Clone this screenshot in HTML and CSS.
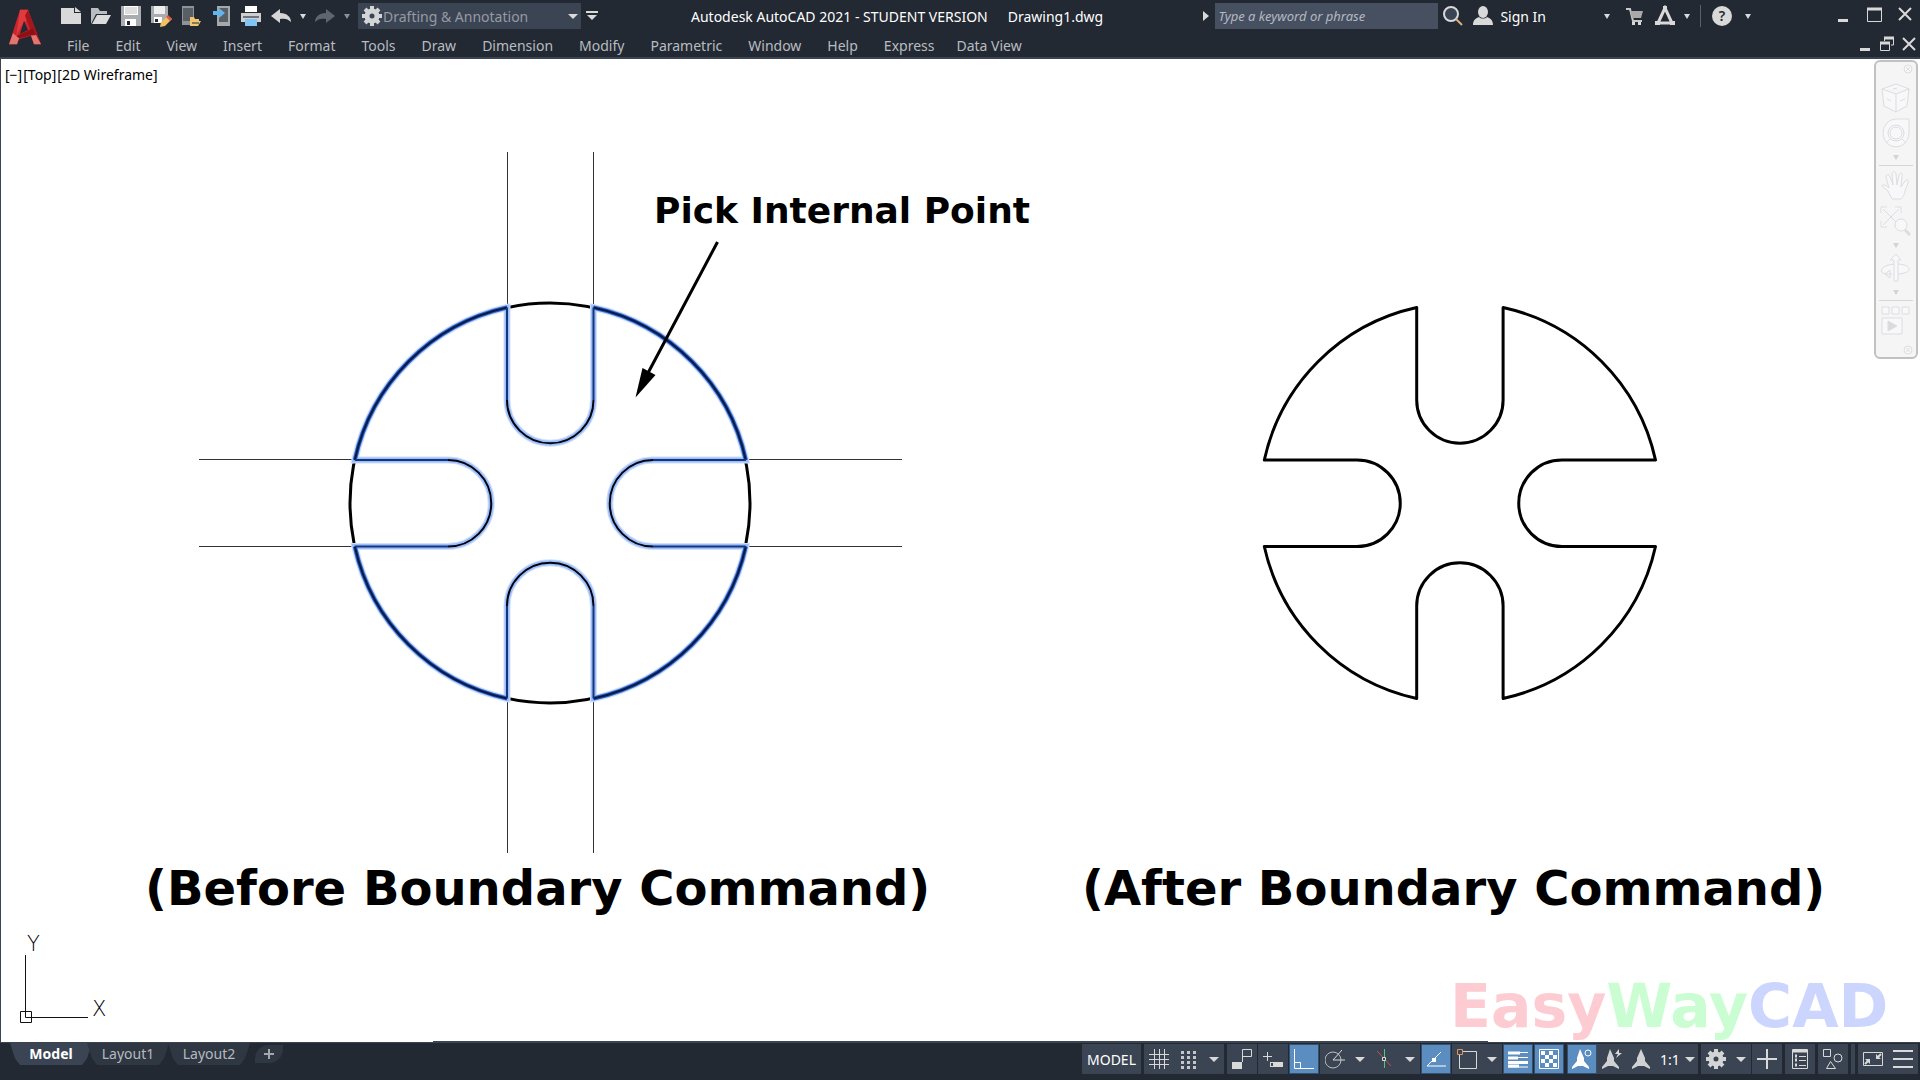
FILE: index.html
```html
<!DOCTYPE html>
<html lang="en">
<head>
    <meta charset="UTF-8">
    <meta name="viewport" content="width=device-width, initial-scale=1.0">
    <title>Autodesk AutoCAD 2021 - Drawing1.dwg</title>
    <link rel="stylesheet" href="styles.css">
</head>
<body>
    <header class="header">
        <button class="app-logo" aria-label="Application menu">
            <svg width="34" height="36" viewBox="0 0 34 43" preserveAspectRatio="none">
                <path d="M12 1h8l13 41h-7l-3-10-12 4-2 6H1z" fill="#c9252c"/>
                <path d="M12 1h8l2 8-9 12-5 13z" fill="#e03a3e"/>
                <path d="M20 1l13 41-6-3L17 8z" fill="#a3161d"/>
                <path d="M16 14l4 11-8 5z" fill="#232932"/>
                <path d="M7 33l18-10 2 7-15 5z" fill="#8e1015"/>
                <path d="M1 42l4-13 6 6-2 7zM26 42l-3-10 5-1 5 11z" fill="#e2766f"/>
            </svg>
        </button>
        <div class="bars">
            <div class="titlebar">
                <div class="quick">
                    <button class="tool" aria-label="New"><svg width="22" height="22" viewBox="0 0 22 22"><path d="M1 3h13v5h7v11H1z" fill="#d9d9d9"/><path d="M15 2l6 5h-6z" fill="#d9d9d9"/></svg></button>
                    <button class="tool" aria-label="Open"><svg width="22" height="22" viewBox="0 0 22 22"><path d="M1 19V3h7l2 3h7v3H6z" fill="#b9bcc0"/><path d="M7 10h14l-5 9H2z" fill="#dcdcdc"/></svg></button>
                    <button class="tool" aria-label="Save"><svg width="22" height="22" viewBox="0 0 22 22"><path d="M1 1h20v20H1z" fill="#aaadaf"/><path d="M4 1h14v9H4z" fill="#fff"/><path d="M5 2h12v7H5z" fill="#dedede"/><path d="M5 14h11v7H5z" fill="#fff"/><path d="M7 16h3v4H7z" fill="#232932"/></svg></button>
                    <button class="tool" aria-label="Save As"><svg width="22" height="22" viewBox="0 0 22 22"><path d="M1 1h17v17H1z" fill="#aaadaf"/><path d="M4 1h11v8H4z" fill="#eee"/><path d="M4 12h8v6H4z" fill="#fff"/><path d="M5 14h3v3H5z" fill="#232932"/><path d="M10 22l1-5 7-6 4 3-7 7z" fill="#f0c063"/><path d="M18 10l4 4-2 2-4-4z" fill="#e05a4e"/></svg></button>
                    <button class="tool" aria-label="Open from mobile"><svg width="22" height="22" viewBox="0 0 22 22"><path d="M2 1h12v19H2z" fill="#8f9398"/><path d="M3 3h10v13H3z" fill="#5a5f66"/><path d="M10 20v-8h4l1 2h4v2h2l-3 5h-8z" fill="#f2c572"/><path d="M12 18h7" stroke="#232932"/></svg></button>
                    <button class="tool" aria-label="Save to mobile"><svg width="22" height="22" viewBox="0 0 22 22"><path d="M7 1h13v20H7z" fill="#a5a8ac"/><path d="M9 3h9v14H9z" fill="#5a5f66"/><path d="M3 6h6V3l6 5-6 5v-3H3z" fill="#5fb6ee"/></svg></button>
                    <button class="tool" aria-label="Plot"><svg width="22" height="22" viewBox="0 0 22 22"><path d="M5 1h12v6H5z" fill="#fff"/><path d="M1 8h20v9H1z" fill="#cfcfcf"/><path d="M3 11h16v2H3z" fill="#70757c"/><path d="M5 14h12v7H5z" fill="#7fc4f5"/></svg></button>
                    <button class="tool" aria-label="Undo"><svg width="22" height="22" viewBox="0 0 22 22"><path d="M1 11l9-7v4c7 0 11 4 11 9-3-3-6-4-11-3v4z" fill="#d5d5d5"/></svg></button>
                    <button class="caret" aria-label="Undo list"></button>
                    <button class="tool" aria-label="Redo"><svg width="22" height="22" viewBox="0 0 22 22"><path d="M21 11l-9-7v4C5 8 1 12 1 17c3-3 6-4 11-3v4z" fill="#5f656d"/></svg></button>
                    <button class="caret dim" aria-label="Redo list"></button>
                    <div class="workspace">
                        <svg class="gear" width="22" height="22" viewBox="0 0 22 22"><use href="#gear"/></svg>
                        <select aria-label="Workspace"><option>Drafting &amp; Annotation</option></select>
                        <span class="caret-big"></span>
                    </div>
                    <button class="customize" aria-label="Customize toolbar"><svg width="12" height="10" viewBox="0 0 12 10"><path d="M0 0h12v2H0zM1 4h10L6 9z" fill="#d9d9d9"/></svg></button>
                </div>
                <h1 class="title"><span>Autodesk AutoCAD 2021 - STUDENT VERSION</span><span>Drawing1.dwg</span></h1>
                <div class="info">
                    <button class="search-toggle" aria-label="Collapse search"><svg width="6" height="10" viewBox="0 0 6 10"><path d="M0 0l6 5-6 5z" fill="#d9d9d9"/></svg></button>
                    <input class="search" type="text" aria-label="Search" placeholder="Type a keyword or phrase">
                    <button class="tool" aria-label="Search"><svg width="22" height="22" viewBox="0 0 22 22"><circle cx="9" cy="9" r="7" fill="#3b4453" stroke="#d9d9d9" stroke-width="2"/><path d="M14 14l6 6" stroke="#d9b27c" stroke-width="2"/></svg></button>
                    <button class="signin"><svg width="22" height="22" viewBox="0 0 22 22"><ellipse cx="11" cy="7" rx="5" ry="6" fill="#d9d9d9"/><path d="M1 20c0-5 3-7 6-8 2 2 6 2 8 0 3 1 6 3 6 8z" fill="#d9d9d9"/></svg>Sign In</button>
                    <button class="caret" aria-label="Account menu"></button>
                    <button class="tool" aria-label="App store"><svg width="22" height="22" viewBox="0 0 22 22"><path d="M2 4h4l3 12h9" fill="none" stroke="#c9c9c9" stroke-width="2"/><path d="M6 6h13l-2 7H8z" fill="#a9a9a9"/><path d="M8 17h3v3H8zM14 17h3v3h-3z" fill="#d9d9d9"/></svg></button>
                    <button class="tool" aria-label="Autodesk app"><svg width="22" height="22" viewBox="0 0 22 22"><path d="M11 3L4 18h14z" fill="none" stroke="#d9d9d9" stroke-width="3"/><path d="M9 1h4v4H9zM1 16h5v4H1zM16 16h5v4h-5z" fill="#d9d9d9"/></svg></button>
                    <button class="caret" aria-label="App menu"></button>
                    <span class="divider"></span>
                    <button class="tool help" aria-label="Help"><span>?</span></button>
                    <button class="caret" aria-label="Help menu"></button>
                </div>
                <div class="window-btns">
                    <button aria-label="Minimize"><svg width="16" height="16" viewBox="0 0 16 16"><path d="M3 13h10v3H3z" fill="#d9d9d9"/></svg></button>
                    <button aria-label="Maximize"><svg width="16" height="16" viewBox="0 0 16 16"><path d="M1 3h15" stroke="#d9d9d9" stroke-width="3"/><path d="M1.500 2v13.500h14V2" fill="none" stroke="#d9d9d9"/></svg></button>
                    <button aria-label="Close"><svg width="16" height="16" viewBox="0 0 16 16"><path d="M2 2l12 12M14 2L2 14" stroke="#d9d9d9" stroke-width="2"/></svg></button>
                </div>
            </div>
            <div class="menubar">
                <nav class="menu">
                    <a href="#">File</a>
                    <a href="#">Edit</a>
                    <a href="#">View</a>
                    <a href="#">Insert</a>
                    <a href="#">Format</a>
                    <a href="#">Tools</a>
                    <a href="#">Draw</a>
                    <a href="#">Dimension</a>
                    <a href="#">Modify</a>
                    <a href="#">Parametric</a>
                    <a href="#">Window</a>
                    <a href="#">Help</a>
                    <a href="#">Express</a>
                    <a href="#">Data View</a>
                </nav>
                <div class="doc-btns">
                    <button aria-label="Minimize drawing"><svg width="16" height="16" viewBox="0 0 16 16"><path d="M3 12h10v3H3z" fill="#d9d9d9"/></svg></button>
                    <button aria-label="Restore drawing"><svg width="16" height="16" viewBox="0 0 16 16"><path d="M5 2h10M1 7h10" stroke="#d9d9d9" stroke-width="3"/><path d="M5.500 2v3M14.500 2v7H12M1.500 7v7.500h9V7" fill="none" stroke="#d9d9d9"/></svg></button>
                    <button aria-label="Close drawing"><svg width="16" height="16" viewBox="0 0 16 16"><path d="M2 2l12 12M14 2L2 14" stroke="#d9d9d9" stroke-width="2"/></svg></button>
                </div>
            </div>
        </div>
    </header>

    <main class="canvas">
        <svg class="drawing" viewBox="1 59 1919 983">
            <!-- construction lines -->
            <path class="thin" d="M507.500 152v155M593.500 152v155M507.500 698v155M593.500 698v155M199 459.500h156M199 546.500h156M746 459.500h156M746 546.500h156"/>
            <circle class="thick" cx="550" cy="503" r="200"/>
            <g id="before">
                <path class="glow" d="M507 307.500V400a43.200 43.200 0 0 0 86.500 0V307.500A200 200 0 0 1 745.800 460H653a43.200 43.200 0 0 0 0 86.500h92.800A200 200 0 0 1 593.500 698.500V606a43.200 43.200 0 0 0-86.500 0v92.500A200 200 0 0 1 354.800 546.500H448a43.200 43.200 0 0 0 0-86.500h-93.200A200 200 0 0 1 507 307.500z"/>
                <path class="halo" d="M507 307.500V400a43.200 43.200 0 0 0 86.500 0V307.500A200 200 0 0 1 745.800 460H653a43.200 43.200 0 0 0 0 86.500h92.800A200 200 0 0 1 593.500 698.500V606a43.200 43.200 0 0 0-86.500 0v92.500A200 200 0 0 1 354.800 546.500H448a43.200 43.200 0 0 0 0-86.500h-93.200A200 200 0 0 1 507 307.500z"/>
                <path class="rim-edge" d="M593.500 307.500A200 200 0 0 1 745.800 460M745.800 546.500A200 200 0 0 1 593.500 698.500M507 698.500A200 200 0 0 1 354.800 546.500M354.800 460A200 200 0 0 1 507 307.500"/>
                <path class="rim" d="M593.500 307.500A200 200 0 0 1 745.800 460M745.800 546.500A200 200 0 0 1 593.500 698.500M507 698.500A200 200 0 0 1 354.800 546.500M354.800 460A200 200 0 0 1 507 307.500"/>
                <path class="slot-arc" d="M507 400a43.200 43.200 0 0 0 86.500 0M653 460a43.200 43.200 0 0 0 0 86.500M593.500 606a43.200 43.200 0 0 0-86.500 0M448 546.500a43.200 43.200 0 0 0 0-86.500"/>
                <path class="slot-line" d="M507 307.500V400M593.500 307.500V400M745.800 460H653M745.800 546.500H653M593.500 698.500V606M507 698.500V606M354.800 546.500H448M354.800 460H448"/>
            </g>
            <path class="thick" d="M1416.700 307.500V400a43.200 43.200 0 0 0 86.400 0V307.500A200 200 0 0 1 1655.500 460H1562a43.200 43.200 0 0 0 0 86.500h93.500A200 200 0 0 1 1503.100 698.500V606a43.200 43.200 0 0 0-86.400 0v92.500A200 200 0 0 1 1264.300 546.500H1357a43.200 43.200 0 0 0 0-86.500h-92.700A200 200 0 0 1 1416.700 307.500z"/>
            <path class="thick" d="M717.500 242L648 373"/>
            <path d="M635.500 397.500l7-29.500 13 7z"/>
            <text class="label" x="654" y="223">Pick Internal Point</text>
            <text class="caption" x="145" y="905">(Before Boundary Command)</text>
            <text class="caption" x="1082" y="905">(After Boundary Command)</text>
            <text class="watermark" x="1450" y="1027"><tspan fill="#fdcbd2">Easy</tspan><tspan fill="#cbfdd2">Way</tspan><tspan fill="#cbd5fd">CAD</tspan></text>
            <!-- UCS icon -->
            <path class="ucs" d="M25.500 955v62.500H88M20.500 1011.500h11v11h-11z"/>
            <text class="axis" x="27" y="951">Y</text>
            <text class="axis" x="92" y="1016">X</text>
            <path d="M433 1041.500h1055" stroke="#3b4453"/>
        </svg>
        <div class="viewport-controls">
            <button>[−]</button><button>[Top]</button><button>[2D Wireframe]</button>
        </div>
        <aside class="navbar">
            <button class="corner" aria-label="Close navigation bar"><svg width="10" height="10" viewBox="0 0 10 10"><circle cx="5" cy="5" r="4"/><path d="M3 3l4 4M7 3L3 7"/></svg></button>
            <button class="nav-first" aria-label="View cube"><svg width="30" height="30" viewBox="0 0 30 30"><path d="M15 1l13 5-2 17-11 6L3 23 1 6zM1 6l14 5 13-5M15 11v18M12 6l4-1M6 16l4 2M19 18l5-2"/></svg></button>
            <button aria-label="Steering wheel"><svg width="30" height="30" viewBox="0 0 30 30"><path d="M15 1h13v14a13 14 0 1 1-13-14z"/><circle cx="15" cy="15" r="8"/><circle cx="15" cy="15" r="6"/><path d="M9 21l-4 4M21 21l4 4"/></svg></button>
            <button class="caret" aria-label="Wheel options"></button>
            <hr>
            <button aria-label="Pan"><svg width="30" height="30" viewBox="0 0 30 30"><path d="M11 28l-4-8-6-5c1-2 4-1 7 2L5 6c0-3 3-3 4 0l3 8-1-11c0-3 4-3 4 0l1 11 2-10c1-3 4-2 3 1l-1 11 4-6c2-2 4-1 3 2l-3 8c-1 5-3 7-4 8z"/></svg></button>
            <button aria-label="Zoom"><svg width="32" height="30" viewBox="0 0 32 30"><path d="M3 3l16 16M19 3L3 19M1 7V1h6M15 1h6v6M1 15v6h6"/><circle cx="21" cy="19" r="6"/><path d="M25 24l5 5" stroke-width="3"/></svg></button>
            <button class="caret" aria-label="Zoom options"></button>
            <button aria-label="Orbit"><svg width="30" height="30" viewBox="0 0 30 30"><path d="M13 28V7h-4l6-6 5 6h-3v21zM13 11C-2 13-2 20 5 21h6M17 11c15 1 15 9 0 10M9 17l-5 4 5 4z"/></svg></button>
            <button class="caret" aria-label="Orbit options"></button>
            <hr>
            <button aria-label="ShowMotion"><svg width="30" height="30" viewBox="0 0 30 30"><path d="M1 1h7v7H1zM11 1h7v7h-7zM21 1h7v7h-7zM1 12h20v16H1z"/><path d="M7 15l9 5-9 5z" fill="#d9dadc"/></svg></button>
            <button class="corner nav-last" aria-label="Navigation bar menu"><svg width="10" height="10" viewBox="0 0 10 10"><circle cx="5" cy="5" r="4"/><path d="M3 4h4M3 6h4"/></svg></button>
        </aside>
    </main>

    <footer class="statusbar">
        <div class="tabs">
            <button class="tab active">Model</button>
            <button class="tab">Layout1</button>
            <button class="tab">Layout2</button>
            <button class="tab add" aria-label="New layout"><svg width="10" height="10" viewBox="0 0 10 10"><path d="M5 0v10M0 5h10" stroke="#a3a8ad" stroke-width="2"/></svg></button>
        </div>
        <div class="status-tools">
            <div class="group"><button class="model">MODEL</button></div>
            <div class="group">
                <button aria-label="Grid"><svg width="20" height="20" viewBox="0 0 20 20"><path d="M5.500 0v20M10.500 0v20M15.500 0v20M0 5.500h20M0 10.500h20M0 15.500h20" stroke="#d9d9d9"/></svg></button>
                <button aria-label="Snap"><svg width="20" height="20" viewBox="0 0 20 20"><path d="M2 3.500h15M2 8.500h15M2 13.500h15M2 18.500h15" stroke="#c4c6c9" stroke-width="3" stroke-dasharray="3 3"/></svg></button>
                <button class="caret-big" aria-label="Snap options"></button>
            </div>
            <div class="split">
                <button aria-label="Infer constraints"><svg width="20" height="20" viewBox="0 0 20 20"><path d="M0 13h10v7H0z" fill="#d9d9d9"/><path d="M10.500 13V.500h9v7h-9" fill="none" stroke="#d9d9d9"/></svg></button>
                <button aria-label="Dynamic input"><svg width="20" height="20" viewBox="0 0 20 20"><path d="M0 7.500h9M4.500 3v9" stroke="#d9d9d9"/><path d="M7 13h13v5H7z" fill="#d9d9d9"/><path d="M8 14h2v3H8z" fill="#3b4453"/></svg></button>
                <button class="on" aria-label="Ortho"><svg width="20" height="20" viewBox="0 0 20 20"><path d="M.500 0v19.500H20M.500 13.500h6v6" fill="none" stroke="#fff"/></svg></button>
                <div class="group">
                    <button aria-label="Polar tracking"><svg width="20" height="20" viewBox="0 0 20 20"><circle cx="8" cy="11" r="8" fill="none" stroke="#b9bcc0"/><path d="M20 11H8l9-10" fill="none" stroke="#d9d9d9"/></svg></button>
                    <button class="caret-big" aria-label="Polar options"></button>
                    <button aria-label="Isometric"><svg width="20" height="20" viewBox="0 0 20 20"><path d="M2 2l14 15" stroke="#c4504e"/><path d="M9.500 0v19" stroke="#56c474"/><path d="M7.500 8.500h3v3h-3z" fill="#3b4453" stroke="#d9d9d9"/></svg></button>
                    <button class="caret-big" aria-label="Isometric options"></button>
                </div>
                <button class="on" aria-label="Object snap tracking"><svg width="20" height="20" viewBox="0 0 20 20"><path d="M15 3L1 17h19" fill="none" stroke="#fff"/><path d="M6 9h4v4H6z" fill="#fff"/></svg></button>
                <div class="group">
                    <button aria-label="Object snap"><svg width="20" height="20" viewBox="0 0 20 20"><path d="M2.500 2.500h17v17h-17z" fill="none" stroke="#d9d9d9"/><path d="M.500.500h5v5h-5z" fill="#3b4453" stroke="#e0955f"/></svg></button>
                    <button class="caret-big" aria-label="Object snap options"></button>
                </div>
                <button class="on" aria-label="Lineweight"><svg width="20" height="20" viewBox="0 0 20 20"><path d="M0 3.500h20M0 8.500h20M0 18h20" stroke="#fff"/><path d="M0 4h12M0 9h10M0 13.500h20M0 17h11" stroke="#fff" stroke-width="3"/></svg></button>
                <button class="on" aria-label="Transparency"><svg width="20" height="20" viewBox="0 0 20 20"><path d="M.500.500h19v19H.500z" fill="none" stroke="#fff"/><path d="M2 4h16M2 12h16" stroke="#fff" stroke-width="4" stroke-dasharray="4 4"/><path d="M6 8h12M6 16h12" stroke="#fff" stroke-width="4" stroke-dasharray="4 4"/></svg></button>
            </div>
            <div class="group">
                <button class="on" aria-label="Annotation visibility"><svg width="20" height="20" viewBox="0 0 20 20"><path d="M8 0l4 9v3l5 6v2l-6-3H6l-6 3v-2l5-6V9z" fill="#fff"/><circle cx="16" cy="4" r="3" fill="none" stroke="#fff"/></svg></button>
                <button aria-label="Auto scale"><svg width="20" height="20" viewBox="0 0 20 20"><path d="M8 0l4 9v3l5 6v2l-6-3H6l-6 3v-2l5-6V9z" fill="#d0d1d3"/><path d="M17 0l-4 5h3l-2 4 6-5h-3z" fill="#d9d9d9"/></svg></button>
                <button aria-label="Annotation scale icon"><svg width="20" height="20" viewBox="0 0 20 20"><path d="M9 0l4 9v3l5 6v2l-6-3H6l-6 3v-2l5-6V9z" fill="#d0d1d3"/></svg></button>
                <button class="scale">1:1<span class="caret-big"></span></button>
            </div>
            <div class="split">
                <div class="group">
                    <button aria-label="Workspace switching"><svg width="22" height="22" viewBox="0 0 22 22"><g id="gear"><circle cx="11" cy="11" r="5" fill="none" stroke="#d3d4d5" stroke-width="5"/><path d="M11 1v4M11 17v4M1 11h4M17 11h4M4 4l3 3M15 15l3 3M18 4l-3 3M7 15l-3 3" stroke="#d3d4d5" stroke-width="4"/></g></svg></button>
                    <button class="caret-big" aria-label="Workspace options"></button>
                </div>
                <button aria-label="Annotation monitor"><svg width="20" height="20" viewBox="0 0 20 20"><path d="M10 0v20M0 10h20" stroke="#d9d9d9" stroke-width="2"/></svg></button>
            </div>
            <div class="group"><button aria-label="Quick properties"><svg width="20" height="20" viewBox="0 0 20 20"><path d="M2.500.500h15v19h-15z" fill="none" stroke="#d9d9d9"/><path d="M3 2h14" stroke="#d9d9d9" stroke-width="3"/><path d="M5 7h2M5 11h2M5 16h2" stroke="#d9d9d9" stroke-width="3"/><path d="M9 7.500h7M9 11.500h7M9 16.500h7" stroke="#d9d9d9"/></svg></button></div>
            <div class="group"><button aria-label="Isolate objects"><svg width="20" height="20" viewBox="0 0 20 20"><path d="M.500.500h7v7h-7zM3.500 19.500l4-7 5 7z" fill="none" stroke="#d9d9d9"/><circle cx="15" cy="9" r="4" fill="none" stroke="#d9d9d9"/></svg></button></div>
            <div class="group sliver"></div>
            <div class="group">
                <button aria-label="Clean screen"><svg width="20" height="20" viewBox="0 0 20 20"><path d="M.500 3.500h19v13H.500z" fill="none" stroke="#d9d9d9"/><path d="M18 5l-3 3M2 15l3-3" stroke="#d9d9d9" stroke-width="2"/><path d="M13 5v5h5zM7 15v-5H2z" fill="#d9d9d9"/></svg></button>
                <button aria-label="Customization"><svg width="20" height="20" viewBox="0 0 20 20"><path d="M0 2h20M0 10h20M0 18h20" stroke="#d9d9d9" stroke-width="2"/></svg></button>
            </div>
        </div>
    </footer>
</body>
</html>
```
FILE: styles.css
```css
:root {
    --bar: #222932;
    --panel: #3b4453;
    --icon: #d9d9d9;
    --blue: #5c8dc0;
}
* {
    margin: 0;
    padding: 0;
    box-sizing: border-box;
}
body {
    display: flex;
    flex-direction: column;
    height: 100vh;
    overflow: hidden;
    background: var(--bar);
    font-family: "Noto Sans", "Open Sans", sans-serif;
    font-size: 14px;
    color: #fff;
}
button, input, select {
    font: inherit;
    color: inherit;
    background: none;
    border: none;
    border-radius: 0;
}
button {
    display: flex;
    align-items: center;
    justify-content: center;
    flex-shrink: 0;
}
svg { display: block; flex-shrink: 0; }

/* header */
.header {
    display: flex;
    border-bottom: 2px solid var(--panel);
}
.app-logo { width: 56px; padding: 0 6px 4px 0; }
.bars { flex: 1; }
.titlebar, .menubar, .quick, .info, .window-btns, .doc-btns, .menu {
    display: flex;
    align-items: center;
}
.titlebar { height: 32px; }
.tool { width: 30px; height: 30px; }
.caret { width: 14px; height: 20px; }
.caret::before, .caret-big::before {
    content: "";
    border: 3px solid transparent;
    border-top: 5px solid var(--icon);
    border-bottom: 0;
}
.caret-big::before { border-width: 5px 5px 0; }
span.caret-big { display: flex; }
.caret.dim::before { border-top-color: #8b9097; }
.workspace {
    display: flex;
    align-items: center;
    width: 223px;
    height: 26px;
    margin-left: 4px;
    padding: 0 3px;
    background: var(--panel);
}
.workspace select {
    flex: 1;
    appearance: none;
    color: #969ba3;
}
.customize { width: 22px; }
.title {
    flex: 1;
    display: flex;
    gap: 20px;
    padding-left: 88px;
    font-size: 14px;
    font-weight: 400;
    white-space: nowrap;
}
.search-toggle { width: 13px; padding-right: 6px; }
.search {
    width: 223px;
    height: 26px;
    padding: 0 3px;
    background: #465061;
    font-size: 13px;
    font-style: italic;
}
.search::placeholder { color: #b4b9c2; }
.signin { gap: 6px; margin-right: 54px; padding-left: 4px; }
.info .caret + .tool { margin-left: 6px; }
.divider { width: 1px; height: 22px; margin: 0 6px; background: #59616e; }
.info .divider + .tool { margin-right: 4px; }
.help span {
    width: 20px;
    height: 20px;
    border-radius: 50%;
    background: var(--icon);
    color: var(--bar);
    font-weight: 600;
    line-height: 20px;
}
.window-btns { gap: 15px; padding: 0 7px 4px 80px; }
.menubar { height: 25px; justify-content: space-between; }
.menu { gap: 26px; padding: 1px 0 0 11px; }
.menu a { color: #b9bcc1; text-decoration: none; }
.menu a:last-child { margin-left: -4px; }
.doc-btns { gap: 6px; padding: 0 3px 2px 0; }

/* drawing area */
.canvas {
    position: relative;
    flex: 1;
    min-height: 0;
    background: #fff;
    border-left: 1px solid var(--panel);
    color: #000;
}
.drawing { width: 100%; height: 100%; }
.thin { fill: none; stroke: #333; }
.thick { fill: none; stroke: #000; stroke-width: 3; stroke-linejoin: round; }
.glow { fill: none; stroke: #cfe0fd; stroke-width: 7; }
.halo { fill: none; stroke: #9dbdfa; stroke-width: 5; }
.rim-edge { fill: none; stroke: #2a5cc0; stroke-width: 4; }
.rim { fill: none; stroke: #061a45; stroke-width: 2; }
.slot-arc { fill: none; stroke: #00040f; stroke-width: 2; }
.slot-line { fill: none; stroke: #12377f; stroke-width: 2; }
.label, .caption, .watermark { font-family: Verdana, "DejaVu Sans", sans-serif; font-weight: 700; }
.label { font-size: 36px; }
.caption { font-size: 48px; }
.watermark { font-size: 60px; }
.ucs { fill: none; stroke: #111; }
.axis { font-family: "DejaVu Sans", sans-serif; font-size: 21px; font-weight: 200; }
.viewport-controls {
    position: absolute;
    top: 6px;
    left: 4px;
    display: flex;
    gap: 1px;
}
.navbar {
    position: absolute;
    top: 1px;
    right: 2px;
    width: 44px;
    display: flex;
    flex-direction: column;
    align-items: center;
    padding: 2px 0;
    background: #f5f5f5;
    border: 2px solid #c1c1c1;
    border-radius: 6px;
}
.navbar svg { fill: #f8f8fa; stroke: #dcdde0; }
.navbar button { margin-bottom: 5px; }
.navbar .caret { height: 8px; margin-bottom: 4px; }
.navbar .caret::before { border-top-color: #d3d4d7; }
.navbar .corner { align-self: flex-end; margin: 0 3px; }
.navbar .nav-first { margin-top: 9px; }
.navbar .nav-last { margin-top: 4px; }
.navbar hr { width: 34px; border: none; border-top: 1px solid #d6d6d6; margin-bottom: 5px; }

/* bottom bar */
.statusbar {
    display: flex;
    justify-content: space-between;
    height: 38px;
    border-top: 1px solid var(--panel);
}
.tabs { display: flex; padding-left: 10px; }
.tab {
    height: 22px;
    min-width: 82px;
    margin-right: -1px;
    padding-bottom: 2px;
    background: #2f3743;
    color: #b5babf;
    clip-path: polygon(0 0, 100% 0, calc(100% - 5px) 70%, calc(100% - 10px) 100%, 10px 100%, 5px 70%);
}
.tab.active {
    margin-right: -5px;
    background: var(--panel);
    color: #fff;
    font-weight: 700;
}
.tab.add {
    min-width: 28px;
    height: 18px;
    margin: 2px 0 0 6px;
    padding: 0;
    clip-path: none;
    border-radius: 14px 0 14px 0;
}
.status-tools {
    display: flex;
    gap: 3px;
    height: 30px;
    margin-top: 1px;
    padding-right: 2px;
}
.group { display: flex; background: var(--panel); }
.split { display: flex; gap: 1px; }
.split > button { background: var(--panel); }
.status-tools button { width: 30px; height: 30px; }
.status-tools button.caret-big { width: 20px; }
.status-tools .on { background: var(--blue); border: 1px solid #34506f; }
.status-tools .model { width: 59px; }
.status-tools .scale { width: 41px; gap: 5px; }
.sliver { width: 4px; }
```
